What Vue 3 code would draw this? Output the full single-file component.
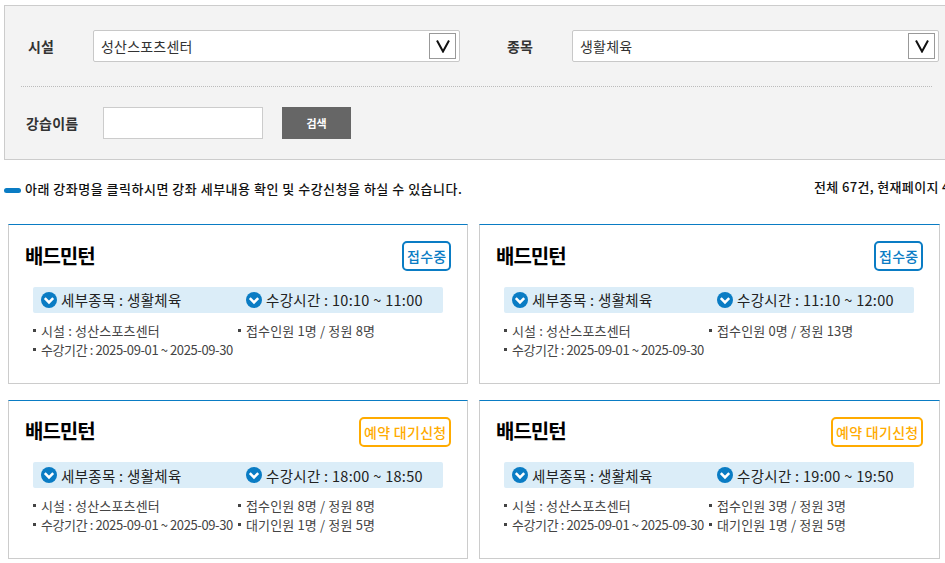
<script setup>
const cards = [
  { state: 'open', label: '접수중', time: '10:10 ~ 11:00', info: '접수인원 1명 / 정원 8명', wait: '' },
  { state: 'open', label: '접수중', time: '11:10 ~ 12:00', info: '접수인원 0명 / 정원 13명', wait: '' },
  { state: 'wait', label: '예약 대기신청', time: '18:00 ~ 18:50', info: '접수인원 8명 / 정원 8명', wait: '대기인원 1명 / 정원 5명' },
  { state: 'wait', label: '예약 대기신청', time: '19:00 ~ 19:50', info: '접수인원 3명 / 정원 3명', wait: '대기인원 1명 / 정원 5명' },
]
</script>

<template>
  <div class="page">
    <div class="search_box">
      <div class="search_row first">
        <div class="label label_a">시설</div>
        <div class="select">
          <span>성산스포츠센터</span>
          <div class="arrow">
            <svg width="16" height="14" viewBox="0 0 16 14"><path d="M2 1.5 L8 12.5 L14 1.5" fill="none" stroke="#111" stroke-width="2" /></svg>
          </div>
        </div>
        <div class="label label_b">종목</div>
        <div class="select">
          <span>생활체육</span>
          <div class="arrow">
            <svg width="16" height="14" viewBox="0 0 16 14"><path d="M2 1.5 L8 12.5 L14 1.5" fill="none" stroke="#111" stroke-width="2" /></svg>
          </div>
        </div>
      </div>
      <div class="search_row second">
        <div class="label label_c">강습이름</div>
        <input type="text" class="name_input">
        <div class="search_btn">검색</div>
      </div>
    </div>

    <div class="notice_row">
      <div class="notice"><i class="dash"></i>아래 강좌명을 클릭하시면 강좌 세부내용 확인 및 수강신청을 하실 수 있습니다.</div>
      <div class="total">전체 67건, 현재페이지 4/7</div>
    </div>

    <div class="card_list">
      <div class="card" v-for="(c, i) in cards" :key="i">
        <div class="card_head">
          <div class="card_title">배드민턴</div>
          <div class="badge" :class="c.state">{{ c.label }}</div>
        </div>
        <div class="bar">
          <div class="bar_item">
            <svg class="check" viewBox="0 0 16 16"><circle cx="8" cy="8" r="8" fill="#0a7cc4" /><path d="M3.8 6.2 L8 10.4 L12.2 6.2" fill="none" stroke="#fff" stroke-width="2.6" /></svg>
            <span>세부종목 : 생활체육</span>
          </div>
          <div class="bar_item">
            <svg class="check" viewBox="0 0 16 16"><circle cx="8" cy="8" r="8" fill="#0a7cc4" /><path d="M3.8 6.2 L8 10.4 L12.2 6.2" fill="none" stroke="#fff" stroke-width="2.6" /></svg>
            <span>수강시간 : {{ c.time }}</span>
          </div>
        </div>
        <ul class="info">
          <li>시설 : 성산스포츠센터</li>
          <li>{{ c.info }}</li>
          <li class="tight">수강기간 : 2025-09-01 ~ 2025-09-30</li>
          <li v-if="c.wait">{{ c.wait }}</li>
        </ul>
      </div>
    </div>
  </div>
</template>

<style>
html, body {
  margin: 0;
  background: #fff;
  overflow: hidden;
}
</style>

<style scoped>
.page {
  width: 945px;
  height: 563px;
  overflow: hidden;
  padding-top: 5px;
  box-sizing: border-box;
  font-family: "Noto Sans CJK KR", "Noto Sans", sans-serif;
  color: #333;
}
.search_box {
  width: 960px;
  height: 155px;
  margin-left: 4px;
  box-sizing: border-box;
  border: 1px solid #ccc;
  background: #f3f3f3;
}
.search_row {
  display: flex;
  align-items: center;
}
.search_row.first {
  width: 911px;
  height: 81px;
  margin-left: 16px;
  box-sizing: border-box;
  border-bottom: 1px dotted #bbb;
}
.search_row.second {
  height: 72px;
}
.label {
  font-size: 14px;
  font-weight: 700;
  letter-spacing: .2px;
  color: #333;
}
.label_a {
  margin-left: 7px;
  width: 65px;
  flex: none;
}
.label_b {
  margin-left: 47px;
  width: 65px;
  flex: none;
}
.label_c {
  margin-left: 21px;
  width: 77px;
  flex: none;
}
.select {
  flex: none;
  width: 367px;
  height: 32px;
  box-sizing: border-box;
  border: 1px solid #c8c8c8;
  border-radius: 2px;
  background: #fff;
  display: flex;
  align-items: center;
  justify-content: space-between;
  padding: 0 3px 0 7px;
  font-size: 14px;
  letter-spacing: .2px;
  color: #333;
}
.arrow {
  width: 27px;
  height: 26px;
  box-sizing: border-box;
  border: 1px solid #999;
  display: flex;
  align-items: center;
  justify-content: center;
}
.name_input {
  width: 160px;
  height: 32px;
  box-sizing: border-box;
  border: 1px solid #ccc;
  background: #fff;
  outline: 0;
  padding: 0;
}
.search_btn {
  margin-left: 19px;
  width: 69px;
  height: 32px;
  background: #666;
  color: #fff;
  font-size: 11px;
  font-weight: 700;
  display: flex;
  align-items: center;
  justify-content: center;
}
.notice_row {
  display: flex;
  width: 1000px;
  height: 64px;
  padding-top: 19px;
  box-sizing: border-box;
  margin-left: 4px;
  font-size: 13px;
  font-weight: 500;
  color: #111;
  line-height: 20px;
}
.notice {
  display: flex;
  align-items: center;
  flex: none;
  width: 810px;
  height: 20px;
  letter-spacing: .5px;
}
.dash {
  width: 17px;
  height: 5px;
  border-radius: 3px;
  background: #0a7cc4;
  margin-right: 4px;
  margin-top: 2px;
  flex: none;
}
.total {
  margin-top: -2px;
  white-space: nowrap;
  letter-spacing: .35px;
}
.card_list {
  display: grid;
  grid-template-columns: 460px 461px;
  column-gap: 11px;
  row-gap: 16px;
  margin-left: 8px;
}
.card {
  height: 159.6px;
  box-sizing: border-box;
  border: 1px solid #ccc;
  border-top: 1px solid #0a7cc4;
  padding: 16px 16px 0 16px;
}
.card_head {
  display: flex;
  justify-content: space-between;
  align-items: center;
  height: 30px;
}
.card_title {
  font-size: 20px;
  font-weight: 700;
  color: #000;
  letter-spacing: -1px;
  padding-bottom: 2px;
}
.badge {
  height: 30px;
  box-sizing: border-box;
  border: 2px solid;
  border-radius: 5px;
  padding: 0 2.5px;
  font-size: 14px;
  letter-spacing: .3px;
  font-weight: 500;
  display: flex;
  align-items: center;
}
.badge.open {
  color: #0a7cc4;
  border-color: #0a7cc4;
}
.badge.wait {
  color: #ffab00;
  border-color: #ffab00;
}
.bar {
  display: flex;
  align-items: center;
  margin: 15.6px 8px 0 8px;
  width: 410px;
  height: 26px;
  border-radius: 2px;
  background: #dbedf8;
  padding-left: 8px;
  box-sizing: border-box;
  font-size: 14.5px;
  letter-spacing: .3px;
  color: #222;
}
.bar_item {
  display: flex;
  align-items: center;
  gap: 4px;
  flex: none;
  width: 205px;
  white-space: nowrap;
}
.check {
  width: 16px;
  height: 16px;
  flex: none;
}
.info {
  list-style: none;
  margin: 8px 0 0 8px;
  padding: 0;
  display: grid;
  grid-template-columns: 205px 205px;
  font-size: 13px;
  letter-spacing: .15px;
  color: #444;
  line-height: 19px;
}
.info li {
  position: relative;
  padding-left: 8px;
  white-space: nowrap;
}
.info li::before {
  content: "";
  position: absolute;
  left: 0;
  top: 8px;
  width: 3px;
  height: 3px;
  background: #444;
}
.info li.tight {
  letter-spacing: -0.4px;
}
</style>
